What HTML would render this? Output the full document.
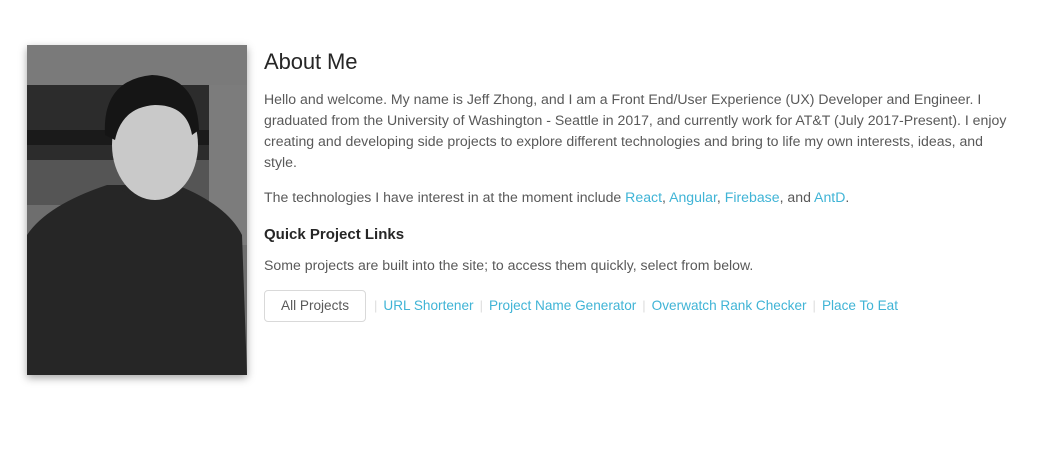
<!DOCTYPE html>
<html><head><meta charset="utf-8"><style>
body{margin:0;background:#fff;width:1060px;height:469px;overflow:hidden;font-family:"Segoe UI","Liberation Sans",sans-serif;color:#595959}
.photo{position:absolute;left:27px;top:45px;width:220px;height:330px;box-shadow:0 3px 8px rgba(0,0,0,.35)}
.c{position:absolute;left:264px;top:47px;width:790px}
h1{margin:0;font-size:22px;font-weight:500;color:#262626;line-height:30px;letter-spacing:-.1px}
p{margin:0;font-size:14.1px;line-height:21px;white-space:nowrap}
a{color:#40b4d6;text-decoration:none}
h2{font-size:15px;font-weight:600;color:#262626;margin:0;line-height:20px}
.btn{display:inline-block;border:1px solid #d9d9d9;border-radius:4px;line-height:30px;padding:0 16px;font-size:13.6px;color:#595959;box-sizing:border-box;height:32px}
.sep{color:#ddd;margin:0 6px;font-size:13px}
</style></head><body>
<svg class="photo" viewBox="0 0 220 330" preserveAspectRatio="none">
<rect width="220" height="330" fill="#6e6e6e"/>
<rect x="0" y="0" width="220" height="40" fill="#7a7a7a"/>
<rect x="0" y="40" width="182" height="115" fill="#2c2c2c"/>
<rect x="0" y="85" width="182" height="15" fill="#1a1a1a"/>
<rect x="0" y="115" width="182" height="45" fill="#555"/>
<rect x="182" y="40" width="38" height="160" fill="#7c7c7c"/>
<path d="M0 190 Q20 160 80 140 L150 140 Q200 160 215 190 L220 330 L0 330Z" fill="#262626"/>
<ellipse cx="128" cy="100" rx="43" ry="55" fill="#c9c9c9"/>
<path d="M78 90 Q75 35 125 30 Q170 32 172 85 L165 90 Q160 60 128 60 Q95 62 88 95Z" fill="#151515"/>
<path d="M95 145 Q128 170 160 145 L160 160 L95 160Z" fill="#262626"/>
</svg>
<div class="c">
<h1>About Me</h1>
<p style="margin-top:12px">Hello and welcome. My name is Jeff Zhong, and I am a Front End/User Experience (UX) Developer and Engineer. I<br>graduated from the University of Washington - Seattle in 2017, and currently work for AT&amp;T (July 2017-Present). I enjoy<br>creating and developing side projects to explore different technologies and bring to life my own interests, ideas, and<br>style.</p>
<p style="margin-top:14px">The technologies I have interest in at the moment include <a>React</a>, <a>Angular</a>, <a>Firebase</a>, and <a>AntD</a>.</p>
<h2 style="margin-top:17px">Quick Project Links</h2>
<p style="margin-top:10px">Some projects are built into the site; to access them quickly, select from below.</p>
<div style="margin-top:14px;font-size:13.6px;white-space:nowrap"><span class="btn">All Projects</span><span class="sep" style="margin-left:8px">|</span><a>URL Shortener</a><span class="sep">|</span><a>Project Name Generator</a><span class="sep">|</span><a>Overwatch Rank Checker</a><span class="sep">|</span><a>Place To Eat</a></div>
</div>
</body></html>
